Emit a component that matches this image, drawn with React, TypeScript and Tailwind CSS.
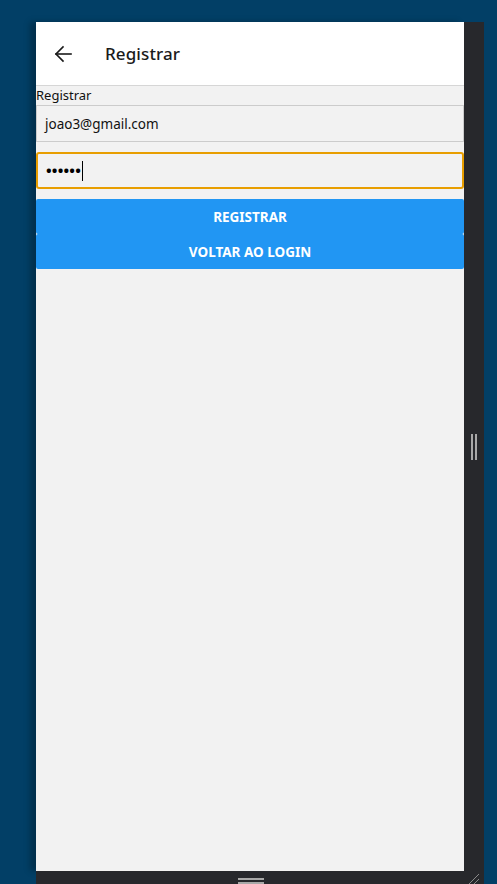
import React from "react";

export default function App() {
  const font = { fontFamily: '"Noto Sans", "Open Sans", "Liberation Sans", sans-serif' };
  return (
    <div className="w-[497px] h-[884px] bg-[#023f66] overflow-hidden flex flex-col pt-[22px] pl-[36px]" style={font}>
      <div className="flex h-[849px]">
        <div className="w-[428px] h-full bg-[#f2f2f2] flex flex-col shadow-[-6px_0_6px_rgba(0,0,0,0.25)]">
          <div className="h-[64px] bg-white border-b border-[#d6d6d6] flex items-center shrink-0 pt-[1px]">
            <svg width="20" height="20" viewBox="0 0 20 20" className="ml-[17px]" fill="none" stroke="#1a1a1a" strokeWidth="1.6" strokeLinecap="square">
              <path d="M3 10 H18" />
              <path d="M10 3 L3 10 L10 17" />
            </svg>
            <span className="ml-[32px] text-[17px] font-medium text-[#1a1a1a] tracking-[0.1px]">Registrar</span>
          </div>
          <div className="text-[13px] leading-[19px] text-[#111] h-[19px]">Registrar</div>
          <div className="h-[37px] border border-[#cccccc] bg-[#f2f2f2] flex items-center pl-[8px] pt-[1px] text-[13.5px] text-[#111]">
            joao3@gmail.com
          </div>
          <div className="h-[37px] mt-[10px] border-2 border-[#e89e00] rounded-[3px] bg-[#f2f2f2] flex items-center pl-[8px]">
            <span className="text-[15px] text-black tracking-[0.2px] font-bold">••••••</span>
            <span className="w-[1px] h-[20px] bg-black ml-[1px]" />
          </div>
          <button className="mt-[10px] h-[35px] bg-[#2196f3] rounded-[2px] text-white text-[13.5px] font-bold flex items-center justify-center pt-[1px]">
            REGISTRAR
          </button>
          <button className="h-[35px] bg-[#2196f3] rounded-[2px] text-white text-[13.5px] font-bold flex items-center justify-center pt-[1px]">
            VOLTAR AO LOGIN
          </button>
        </div>
        <div className="w-[20px] h-full bg-[#27282c] flex items-center justify-center">
          <div className="flex gap-[2px] h-[26px]">
            <div className="w-[2px] h-full bg-[#a8a8a8]" />
            <div className="w-[2px] h-full bg-[#a8a8a8]" />
          </div>
        </div>
      </div>
      <div className="w-[448px] h-[13px] bg-[#27282c] relative">
        <div className="absolute left-[202px] top-[7px] w-[26px] h-[2px] bg-[#a8a8a8]" />
        <div className="absolute left-[202px] top-[11px] w-[26px] h-[2px] bg-[#a8a8a8]" />
        <svg className="absolute left-[432px] top-[2px]" width="12" height="11" viewBox="0 0 12 11" stroke="#8a8a8a" strokeWidth="1">
          <path d="M1 11 L11 1" />
          <path d="M6 11 L11 6" />
        </svg>
      </div>
    </div>
  );
}
